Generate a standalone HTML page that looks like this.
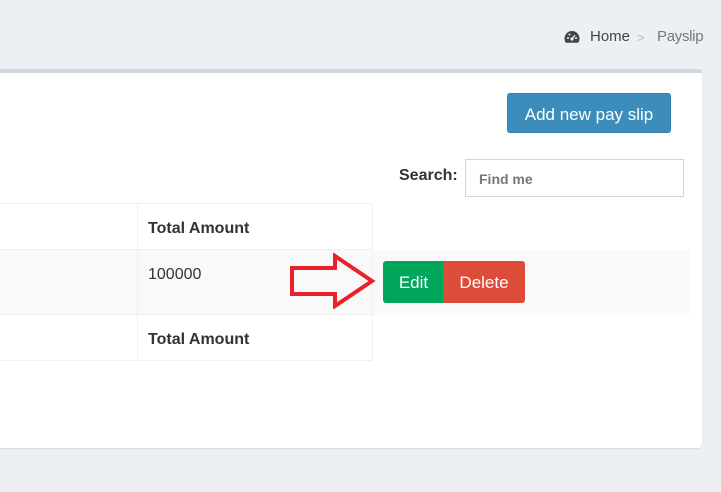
<!DOCTYPE html>
<html><head><style>
body{margin:0;width:721px;height:492px;background:#ecf0f5;font-family:"Liberation Sans",sans-serif;position:relative;overflow:hidden;color:#333}
.bc{position:absolute;top:28px;font-size:15px}
.card{position:absolute;left:0;top:69px;width:702px;height:375px;background:#fff;border-top:4px solid #d2d6de;border-radius:0 3px 3px 0;box-shadow:0 1px 1px rgba(0,0,0,.1)}
.btn{position:absolute;color:#fff;font-size:17px;text-align:center;border-radius:3px}
.cell{position:absolute;border:1px solid #f0f0f0;box-sizing:border-box;font-size:16px;padding:16px 10px}
b{font-weight:bold}
</style></head><body>
<svg style="position:absolute;left:564px;top:30px" width="16" height="14" viewBox="0 0 16 14"><path d="M8 1A7.5 7.5 0 0 0 .5 8.5c0 1.6.5 3 1.3 4.2h12.4A7.5 7.5 0 0 0 8 1z" fill="#444"/><circle cx="8" cy="9" r="1.6" fill="#ecf0f5"/><path d="M8 9l3-4" stroke="#ecf0f5" stroke-width="1.3"/><circle cx="4" cy="8" r="1" fill="#ecf0f5"/><circle cx="5.5" cy="4.5" r="1" fill="#ecf0f5"/><circle cx="12" cy="8" r="1" fill="#ecf0f5"/></svg>
<div class="bc" style="left:590px;color:#444">Home</div>
<div class="bc" style="left:637px;color:#bbb;font-size:13px;top:30px">&gt;</div>
<div class="bc" style="left:657px;color:#777;letter-spacing:-0.3px">Payslip</div>
<div class="card"></div>
<div class="btn" style="left:507px;top:93px;width:164px;height:40px;line-height:42px;background:#3c8dbc;border:1px solid #367fa9;box-sizing:border-box">Add new pay slip</div>
<div style="position:absolute;left:399px;top:167px;font-weight:bold;font-size:16px">Search:</div>
<div style="position:absolute;left:465px;top:159px;width:219px;height:38px;border:1px solid #d2d6de;box-sizing:border-box;font-size:14px;color:#777;font-weight:bold;padding:11px 13px">Find me</div>
<div style="position:absolute;left:0;top:250px;width:690px;height:65px;background:#f9f9f9"></div>
<div class="cell" style="left:-2px;top:203px;width:140px;height:47px"></div>
<div class="cell" style="left:137px;top:203px;width:236px;height:47px"><b>Total Amount</b></div>
<div class="cell" style="left:-2px;top:250px;width:140px;height:65px;border-top:none;border-bottom:none"></div>
<div class="cell" style="left:137px;top:250px;width:236px;height:65px;border-top:none;border-bottom:none">100000</div>
<div class="cell" style="left:-2px;top:314px;width:140px;height:47px"></div>
<div class="cell" style="left:137px;top:314px;width:236px;height:47px"><b>Total Amount</b></div>
<div class="btn" style="left:383px;top:261px;width:61px;height:42px;line-height:44px;background:#00a65a;border-radius:3px 0 0 3px">Edit</div>
<div class="btn" style="left:443px;top:261px;width:82px;height:42px;line-height:44px;background:#dd4b39;border-radius:0 3px 3px 0">Delete</div>
<svg style="position:absolute;left:288px;top:253px" width="90" height="56"><path d="M4 15H47V3L84 28L47 53V41H4Z" fill="none" stroke="#e8212a" stroke-width="4"/></svg>
</body></html>
